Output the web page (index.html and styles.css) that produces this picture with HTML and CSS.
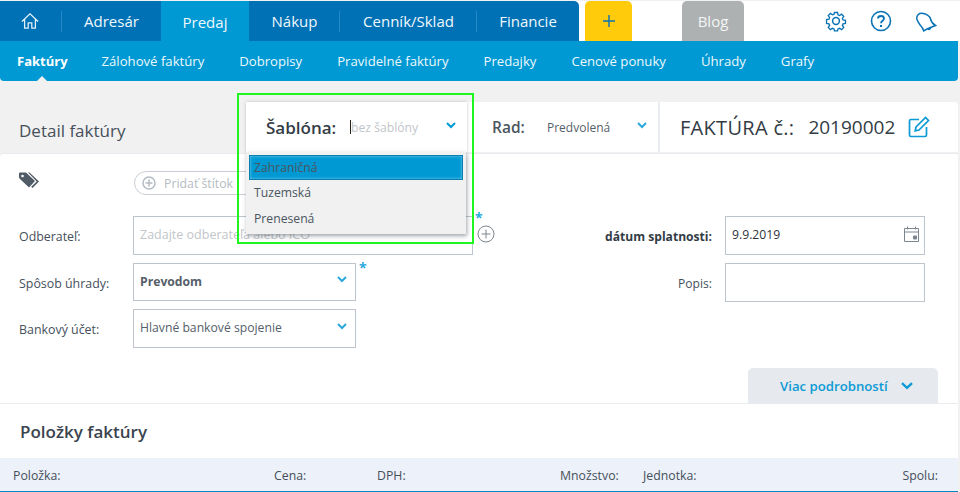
FILE: index.html
```html
<!DOCTYPE html>
<html lang="sk">
<head>
<meta charset="utf-8">
<title>Detail faktúry</title>
<link rel="stylesheet" href="styles.css">
</head>
<body>
<header class="topbar">
  <nav class="tabs">
    <a class="tab tab-home"><svg class="home-icon" width="18" height="18" viewBox="0 0 20 20" fill="none" stroke="#e3f2f9" stroke-width="1.400"><path d="M1 10.500 10 2l9 8.500M4 8v10h4v-6h4v6h4V8"/></svg></a>
    <a class="tab tab-adresar">Adresár</a>
    <a class="tab tab-active">Predaj</a>
    <a class="tab tab-nakup sep">Nákup</a>
    <a class="tab tab-cennik sep">Cenník/Sklad</a>
    <a class="tab tab-fin">Financie</a>
  </nav>
  <a class="plus"><svg width="14" height="14" viewBox="0 0 14 14" stroke="#0a72b5" stroke-width="1.400"><path d="M7 1v12M1 7h12"/></svg></a>
  <a class="blog">Blog</a>
  <div class="tools">
    <svg width="22" height="22" viewBox="0 0 22 22" fill="none" stroke="#0a72b5" stroke-width="1.500"><path d="M9.300 1.500h3.400l.5 2.700 1.700.7 2.300-1.500 2.400 2.400-1.500 2.300.7 1.700 2.700.5v3.400l-2.700.5-.7 1.700 1.500 2.300-2.400 2.400-2.300-1.500-1.700.7-.5 2.100H9.300l-.5-2.100-1.700-.7-2.300 1.500-2.400-2.400 1.500-2.300-.7-1.700-2.700-.5V9.500l2.700-.5.700-1.700-1.500-2.300 2.400-2.400 2.300 1.500 1.700-.7z" transform="translate(1.100 1.100) scale(.9)"/><circle cx="11" cy="11" r="3.400"/></svg>
    <svg width="22" height="22" viewBox="0 0 22 22" fill="none" stroke="#0a72b5" stroke-width="1.600"><circle cx="11" cy="11" r="9.500"/><path d="M8 8.500C8 6.800 9.400 6 11 6s3 1 3 2.500c0 2.200-3 2.300-3 4.800" stroke-width="1.800"/><path d="M11 15v2" stroke-width="2"/></svg>
    <svg width="22" height="22" viewBox="0 0 22 22" fill="none" stroke="#0a72b5" stroke-width="1.500"><path d="M1.700 7.600C2.500 4.500 4.500 3.300 6.500 3.300c4.500 0 8.500 2.700 9 5.700.5 2 1.500 4.500 5 6.500L12 19l-3.300 1.800c-.7-2.300-1.700-3.800-3.200-5.300C4 13.500 1.500 10.500 1.700 7.600z"/><path d="M15.500 17.500c0 1.500-1 2.500-2.500 1.500"/></svg>
  </div>
</header>
<nav class="subnav">
  <a class="sub sub-active">Faktúry</a>
  <a class="sub">Zálohové faktúry</a>
  <a class="sub">Dobropisy</a>
  <a class="sub">Pravidelné faktúry</a>
  <a class="sub">Predajky</a>
  <a class="sub">Cenové ponuky</a>
  <a class="sub">Úhrady</a>
  <a class="sub">Grafy</a>
</nav>

<main class="main">
  <div class="head">
    <h1 class="title">Detail faktúry</h1>
    <div class="panel p-sablona">
      <span class="sablona-label">Šablóna:</span>
      <span class="caret"></span><span class="sablona-val">bez šablóny</span>
      <svg class="chev" width="10" height="7" viewBox="0 0 10 7"><path d="M1 1l4 4 4-4" fill="none" stroke="#0099d3" stroke-width="2"/></svg>
    </div>
    <div class="panel p-rad">
      <span class="rad-label">Rad:</span>
      <span class="rad-val">Predvolená</span>
      <svg class="chev" width="10" height="7" viewBox="0 0 10 7"><path d="M1 1l4 4 4-4" fill="none" stroke="#2ca9dc" stroke-width="2"/></svg>
    </div>
    <div class="panel p-cislo">
      <span class="cislo-label">FAKTÚRA č.:</span>
      <span class="cislo-val">20190002</span>
      <svg width="22" height="22" viewBox="0 0 22 22" fill="none" stroke="#0b9ad6" stroke-width="1.700"><path d="M11 3.500H3a1.500 1.500 0 0 0-1.500 1.500v14A1.500 1.500 0 0 0 3 20.500h14a1.500 1.500 0 0 0 1.500-1.500v-8"/><path d="M8 11 17.500 1.500l3 3L11 14l-3.800.8z"/></svg>
    </div>
  </div>

  <section class="card">
    <div class="form">
      <div class="col-left">
        <div class="tag-row">
          <svg class="tag-icon" width="20" height="16" viewBox="0 0 20 16"><path fill="#515b66" fill-rule="evenodd" d="M0 1.500Q0 .5 1 .5h6L16 9l-6 6.500L1 7Q0 6 0 5zM3.500 2.700a1.300 1.300 0 1 0 .01 0z"/><path fill="#515b66" d="M9 .5h1.500l9.500 9-6.500 6.500-1.300-1.200 5.500-5.300z"/></svg>
          <span class="pill"><svg width="14" height="14" viewBox="0 0 14 14" fill="none" stroke="#b5bcc3" stroke-width="1.500"><circle cx="7" cy="7" r="6"/><path d="M7 3.500v7M3.500 7h7"/></svg>Pridať štítok</span>
        </div>
        <div class="row row-odb">
          <label class="lbl">Odberateľ:</label>
          <div class="field field-odb"><span class="ph">Zadajte odberateľa alebo IČO</span></div>
          <span class="req req-odb">*</span>
          <svg class="add" width="18" height="18" viewBox="0 0 18 18" fill="none" stroke="#7d868f"><circle cx="9" cy="9" r="8"/><path d="M9 4.500v9M4.500 9h9"/></svg>
        </div>
        <div class="row row-sp">
          <label class="lbl">Spôsob úhrady:</label>
          <div class="field field-sel"><b>Prevodom</b><svg class="chev" width="10" height="7" viewBox="0 0 10 7"><path d="M1 1l4 4 4-4" fill="none" stroke="#2ca9dc" stroke-width="2"/></svg></div>
          <span class="req">*</span>
        </div>
        <div class="row row-sp">
          <label class="lbl">Bankový účet:</label>
          <div class="field field-sel field-tall"><span>Hlavné bankové spojenie</span><svg class="chev" width="10" height="7" viewBox="0 0 10 7"><path d="M1 1l4 4 4-4" fill="none" stroke="#2ca9dc" stroke-width="2"/></svg></div>
        </div>
      </div>
      <div class="col-right">
        <div class="row-r">
          <label class="lbl-r strong">dátum splatnosti:</label>
          <div class="field field-date"><span>9.9.2019</span><svg width="15" height="16" viewBox="0 0 15 16" fill="none" stroke="#7d868f"><path d="M.5 2.500h14v13H.5zM.5 6h14M3.500 .5v3M11.500 .5v3"/><path d="M9.500 10h3v3h-3z" fill="#7d868f"/></svg></div>
        </div>
        <div class="row-r">
          <label class="lbl-r">Popis:</label>
          <div class="field field-date"></div>
        </div>
      </div>
    </div>
    <div class="more-wrap">
      <a class="more">Viac podrobností<svg width="12" height="8" viewBox="0 0 12 8"><path d="M1 1.200l5 4.600 5-4.600" fill="none" stroke="#0b9ad6" stroke-width="2.400"/></svg></a>
    </div>
    <h2 class="items-title">Položky faktúry</h2>
    <div class="thead">
      <span class="c-pol">Položka:</span>
      <span class="c-cena">Cena:</span>
      <span class="c-dph">DPH:</span>
      <span class="c-mn">Množstvo:</span>
      <span class="c-jed">Jednotka:</span>
      <span class="c-spolu">Spolu:</span>
    </div>
  </section>
</main>

<ul class="dropdown">
  <li class="opt opt-sel">Zahraničná</li>
  <li class="opt">Tuzemská</li>
  <li class="opt">Prenesená</li>
</ul>
<div class="highlight"></div>
</body>
</html>
```
FILE: styles.css
```css
* { box-sizing: border-box; }
html, body { margin: 0; padding: 0; }
body {
  position: relative;
  width: 960px;
  height: 492px;
  overflow: hidden;
  background: #f1f1f1;
  font-family: "Open Sans", "Noto Sans", sans-serif;
  font-size: 12px;
  color: #45505b;
}
a { display: block; }

.topbar {
  display: flex;
  height: 40px;
  margin-top: 1px;
  background: #fff;
}
.tabs {
  display: flex;
  width: 579px;
  background: #0071b5;
  border-top-right-radius: 5px;
}
.tab {
  display: flex;
  align-items: center;
  justify-content: center;
  position: relative;
  color: #f1f8fc;
  font-size: 15px;
}
.tab-home { width: 62px; }
.home-icon { margin-left: -2px; }
.tab-adresar { width: 99px; }
.tab-active { width: 88px; background: #0099d3; padding-top: 1px; }
.tab-nakup { width: 91px; }
.tab-cennik { width: 137px; }
.tab-fin { width: 102px; }
.tab-home::after, .sep::after {
  content: "";
  position: absolute;
  right: 0;
  top: 10px;
  height: 21px;
  width: 1px;
  background: #2489c4;
}
.plus {
  display: flex;
  align-items: center;
  justify-content: center;
  width: 47px;
  margin-left: 6px;
  background: #ffcb0a;
  border-radius: 5px 5px 0 0;
}
.blog {
  display: flex;
  align-items: center;
  justify-content: center;
  width: 62px;
  margin-left: 50px;
  color: #f4f5f5;
  font-size: 15px;
  background: #adb1b2;
  border-radius: 5px 5px 0 0;
}
.tools {
  display: flex;
  align-items: center;
  gap: 23px;
  margin-left: 81px;
}

.subnav {
  display: flex;
  align-items: center;
  gap: 35px;
  position: relative;
  height: 40px;
  width: 958px;
  padding: 0 0 1px 17px;
  background: #0099d3;
  border-radius: 0 0 4px 4px;
}
.sub { color: #eef8fc; font-size: 13.150px; }
.sub-active { font-weight: 700; font-size: 13px; color: #fff; position: relative; margin-right: -1px; }
.sub-active::after {
  content: "";
  position: absolute;
  left: 20px;
  bottom: -11px;
  border: 5px solid transparent;
  border-top: 0;
  border-bottom-color: #f1f1f1;
}

.main { width: 958px; padding-top: 21px; }
.head { display: flex; height: 51px; }
.title {
  width: 246px;
  margin: 0;
  padding: 18px 0 0 19px;
  font-size: 17px;
  font-weight: 400;
  line-height: 22px;
  color: #45505b;
}
.panel {
  display: flex;
  align-items: center;
  height: 50px;
  background: #fff;
  position: relative;
}
.p-sablona {
  width: 221px;
  padding: 0 11px 0 20px;
  box-shadow: 0 0 3px rgba(90, 100, 110, .35);
  z-index: 2;
}
.sablona-label { font-size: 17px; font-weight: 600; color: #333c45; width: 84px; }
.caret { width: 1px; height: 14px; background: #222; }
.sablona-val { flex: 1; font-size: 12.200px; color: #c2c6ca; }
.p-rad { width: 191px; padding: 0 11px 0 25px; }
.rad-label { font-size: 15.500px; font-weight: 600; color: #4c5660; width: 55px; }
.rad-val { flex: 1; font-size: 12px; color: #56606a; }
.p-sablona .chev, .p-rad .chev { margin-top: -3px; }
.p-cislo {
  flex: 1;
  padding: 0 0 0 20px;
  border-left: 2px solid #e8ebef;
  border-top-right-radius: 4px;
}
.cislo-label { font-size: 20px; font-weight: 500; letter-spacing: .3px; color: #333c45; }
.cislo-val { font-size: 19px; font-weight: 500; color: #333c45; margin: 0 13px 0 14px; }

.card {
  height: 339px;
  background: #fff;
  border-radius: 4px 0 0 0;
  display: flex;
  flex-direction: column;
  border-top: 1px solid #e8ebef;
}
.form {
  display: flex;
  justify-content: space-between;
  height: 214px;
  padding: 17px 33px 0 19px;
}
.col-left { position: relative; }
.tag-row { display: flex; align-items: center; height: 24px; margin-bottom: 21px; }
.tag-icon { margin-top: -6px; }
.pill {
  display: flex;
  align-items: center;
  gap: 8px;
  height: 24px;
  width: 160px;
  margin-left: 95px;
  padding-left: 7px;
  border: 1px solid #c9ced4;
  border-radius: 12px;
  color: #b5bcc3;
  font-size: 12.300px;
}
.row { display: flex; align-items: flex-start; position: relative; }
.lbl { width: 114px; padding-top: 12px; color: #45505b; font-size: 12.400px; line-height: 17px; }
.field {
  display: flex;
  align-items: center;
  border: 1px solid #bdc4cb;
  background: #fff;
  font-size: 12.200px;
  padding: 0 6px 4px;
}
.row-odb { margin-bottom: 8px; }
.field-odb { width: 340px; height: 39px; padding-bottom: 3px; }
.ph { color: #c2c6ca; font-size: 12.500px; }
.req { color: #2ca9dc; font-size: 14px; font-weight: 700; line-height: 12px; margin: -1px 0 0 3px; }
.req-odb { position: absolute; left: 456px; top: -4px; margin: 0; }
.add { position: absolute; left: 458px; top: 9px; }
.row-sp { margin-bottom: 8px; }
.field-sel { width: 223px; height: 38px; justify-content: space-between; padding: 0 8px 2px 6px; color: #56606a; }
.field-sel .chev { margin-top: -3px; }
.field-tall { height: 39px; }
.field-sel b { color: #56606a; font-size: 12.200px; }
.col-right { padding-top: 45px; }
.row-r { display: flex; align-items: flex-start; margin-bottom: 8px; }
.lbl-r { width: 140px; padding: 12px 13px 0 0; text-align: right; font-size: 12.100px; line-height: 17px; white-space: nowrap; }
.lbl-r.strong { font-weight: 700; color: #333c45; }
.field-date { width: 200px; height: 39px; justify-content: space-between; padding: 0 5px 3px 6px; color: #2e343a; }

.more-wrap {
  display: flex;
  justify-content: flex-end;
  height: 35px;
  padding-right: 20px;
  border-bottom: 1px solid #e9ebee;
  box-sizing: content-box;
}
.more {
  display: flex;
  align-items: center;
  gap: 13px;
  width: 190px;
  height: 35px;
  padding: 0 0 0 32px;
  background: #e6e9ed;
  border-radius: 5px 5px 0 0;
  color: #0b9ad6;
  font-size: 13.200px;
  font-weight: 600;
}
.items-title {
  margin: 0;
  height: 54px;
  padding: 17px 0 0 20px;
  font-size: 17px;
  font-weight: 600;
  line-height: 22px;
  color: #3a444e;
}
.thead {
  display: flex;
  align-items: center;
  height: 34px;
  padding: 1px 20px 0 13px;
  background: #edf1f9;
  border-bottom: 1px solid #0b88c2;
  color: #45505b;
  font-size: 12.300px;
}
.c-pol { width: 261px; }
.c-cena { width: 103px; }
.c-dph { width: 183px; }
.c-mn { width: 83px; }
.c-jed { flex: 1; }

.dropdown {
  position: absolute;
  left: 246px;
  top: 152px;
  width: 220px;
  height: 82px;
  margin: 0;
  padding: 3px;
  list-style: none;
  background: #f1f1f1;
  box-shadow: 1px 2px 4px rgba(70, 80, 90, .5);
  z-index: 3;
}
.opt {
  height: 26px;
  padding-left: 5px;
  font-size: 12.200px;
  line-height: 26px;
  color: #4b5560;
}
.opt-sel {
  height: 25px;
  padding-left: 4px;
  line-height: 23px;
  background: #0099d3;
  border: 1px solid #0b7fb0;
  box-shadow: inset 0 0 3px rgba(255, 255, 255, .5);
}
.highlight {
  position: absolute;
  left: 237px;
  top: 93px;
  width: 237px;
  height: 151px;
  border: 2px solid #1ff51f;
  z-index: 4;
  pointer-events: none;
}
```
